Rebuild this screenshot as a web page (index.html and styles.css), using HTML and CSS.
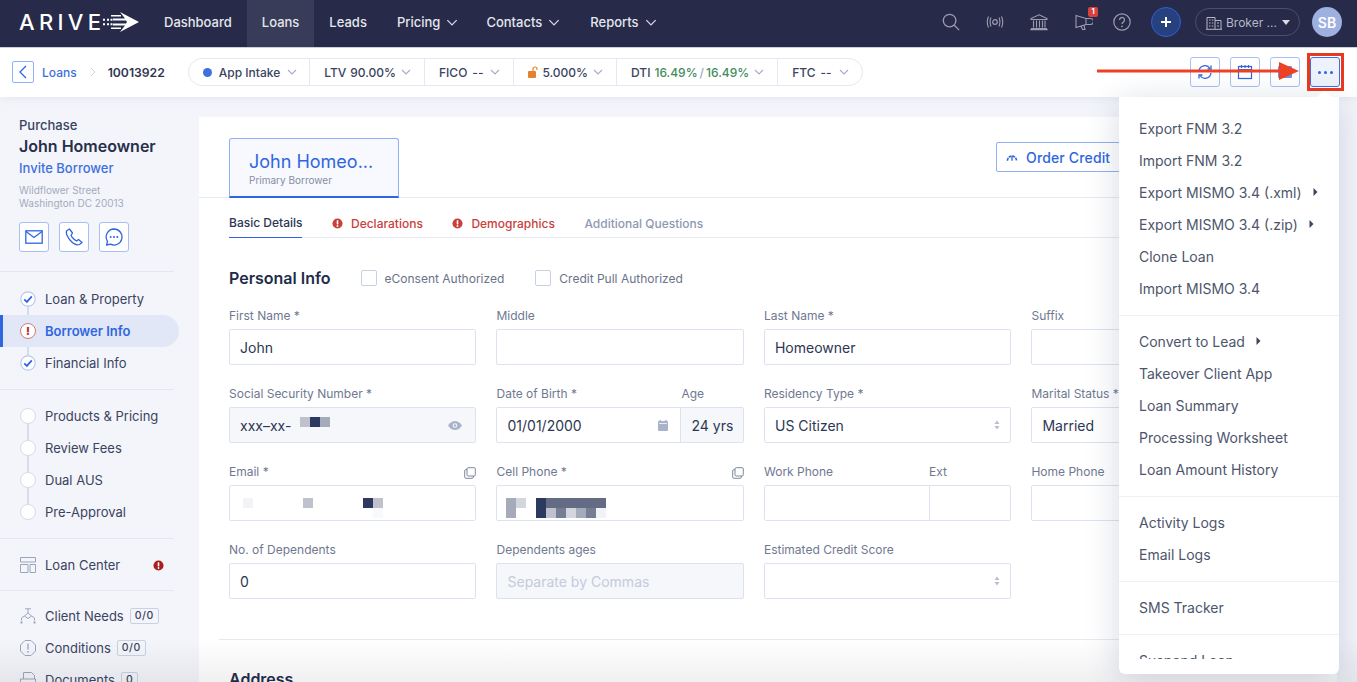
FILE: index.html
```html
<!DOCTYPE html>
<html lang="en">
<head>
<meta charset="utf-8">
<title>Arive Loan</title>
<link rel="stylesheet" href="styles.css">
</head>
<body>
<svg class="sprite" aria-hidden="true">
  <symbol id="chev" viewBox="0 0 10 6"><path d="M1 1l4 4 4-4" fill="none" stroke="currentColor" stroke-width="1.1"/></symbol>
  <symbol id="check" viewBox="0 0 16 16"><circle cx="8" cy="8" r="7.2" fill="#fff" stroke="#b9c9ee" stroke-width="1.2"/><path d="M4.2 8.300l2.700 2.600 4.900-5.500" fill="none" stroke="#2f66e0" stroke-width="1.800"/></symbol>
  <symbol id="alert" viewBox="0 0 12 12"><circle cx="6" cy="6" r="5.5" fill="currentColor"/><rect x="5.1" y="2.4" width="1.8" height="4.6" rx=".7" fill="#fff"/><circle cx="6" cy="8.7" r="1" fill="#fff"/></symbol>
  <symbol id="copy" viewBox="0 0 12 12"><rect x="3" y=".7" width="8.3" height="8.3" rx="1.2" fill="none" stroke="currentColor"/><path d="M3 2.6H1.9C1.2 2.6.7 3.1.7 3.8v6.3c0 .7.5 1.2 1.2 1.2h6.3c.7 0 1.2-.5 1.2-1.2V9" fill="none" stroke="currentColor"/></symbol>
  <symbol id="updown" viewBox="0 0 6 10"><path d="M3 .5L5.5 4H.5zM3 9.5L.5 6h5z" fill="currentColor"/></symbol>
  <symbol id="right" viewBox="0 0 5 8"><path d="M.5 0l4 4-4 4z" fill="currentColor"/></symbol>
</svg>

<header class="topbar">
  <a class="logo">
    <span class="logo-word">ARIVE</span>
    <svg class="logo-mark" viewBox="0 0 36 20"><path d="M17 0l19 10-19 10 5-6.500H10v-2h13L24 10l-1-1.500H10v-2h12z" fill="#fff"/><path d="M0 6.700h2v2H0zM4 6.700h2v2H4zM7.500 6.700h2v2h-2zM0 11.300h2v2H0zM4 11.300h2v2H4zM7.500 11.300h2v2h-2zM8 3h10v1.500H8zM8 15.500h10V17H8z" fill="#fff"/></svg>
  </a>
  <nav class="mainnav">
    <a class="navitem">Dashboard</a>
    <a class="navitem is-active">Loans</a>
    <a class="navitem">Leads</a>
    <a class="navitem navitem-tight">Pricing<svg class="navchev"><use href="#chev"/></svg></a>
    <a class="navitem">Contacts<svg class="navchev"><use href="#chev"/></svg></a>
    <a class="navitem">Reports<svg class="navchev"><use href="#chev"/></svg></a>
  </nav>
  <div class="toptools">
    <span class="tool"><svg viewBox="0 0 18 18" class="ic18"><circle cx="7.600" cy="7.600" r="6.300" fill="none" stroke="currentColor" stroke-width="1.300"/><path d="M12.300 12.300l4.800 4.800" stroke="currentColor" stroke-width="1.300"/></svg></span>
    <span class="tool"><svg viewBox="0 0 18 12" class="ic18"><circle cx="9" cy="6" r="2.300" fill="none" stroke="currentColor" stroke-width="1.200"/><path d="M5 1.500Q3.200 6 5 10.500M13 1.500q1.800 4.500 0 9M2.500.5Q0 6 2.500 11.500M15.500.5Q18 6 15.500 11.500" fill="none" stroke="currentColor" stroke-width="1.100"/></svg></span>
    <span class="tool"><svg viewBox="0 0 18 16" class="ic18"><path d="M9 .8L17 4.500v1H1v-1zM1 14.500h16M.3 15.600h17.400M3.500 6.500v7M6.500 6.500v7M9.500 6.500v7M12.500 6.500v7M15 6.500v7" fill="none" stroke="currentColor" stroke-width="1.100"/></svg></span>
    <span class="tool tool-badge"><svg viewBox="0 0 18 16" class="ic18"><path d="M1 1.500l10 3h4.500a2 2 0 0 1 0 6H11l-10 3zM11 4.500v6M6 12l1.500 3.500h2.500l-1-4" fill="none" stroke="currentColor" stroke-width="1.100"/></svg><span class="badge">1</span></span>
    <span class="tool"><svg viewBox="0 0 18 18" class="ic18"><circle cx="9" cy="9" r="8.200" fill="none" stroke="currentColor" stroke-width="1.200"/><path d="M6.500 7a2.500 2.500 0 1 1 3.800 2.100c-.9.600-1.300 1-1.300 2" fill="none" stroke="currentColor" stroke-width="1.300"/><circle cx="9" cy="13.300" r=".9" fill="currentColor"/></svg></span>
    <span class="tool"><span class="plus"><svg viewBox="0 0 12 12" class="ic12"><path d="M6 1v10M1 6h10" stroke="#fff" stroke-width="2"/></svg></span></span>
  </div>
  <div class="broker">
    <svg viewBox="0 0 16 16" class="ic16"><path d="M1 15V3.500h8V15M9 6.500h6V15M0 15.300h16M3 6h1.500M5.800 6h1.500M3 9h1.500M5.800 9h1.500M3 12h1.500M5.800 12h1.500M11 9h2M11 12h2" fill="none" stroke="currentColor" stroke-width="1"/></svg>
    <span>Broker ...</span>
    <i class="caret"></i>
  </div>
  <span class="avatar">SB</span>
</header>

<div class="subbar">
  <button class="backbtn"><svg viewBox="0 0 8 14" class="ic-back"><path d="M7 1L1 7l6 6" fill="none" stroke="#2f66e0" stroke-width="1.300"/></svg></button>
  <a class="crumb">Loans</a>
  <svg viewBox="0 0 6 10" class="crumbsep"><path d="M1 1l4 4-4 4" fill="none" stroke="#c9d0e2" stroke-width="1"/></svg>
  <strong class="loanno">10013922</strong>
  <div class="pills">
    <span class="pill pill-first"><i class="dot"></i>App Intake<svg class="chev"><use href="#chev"/></svg></span>
    <span class="pill pill-tight"><span class="pill-label">LTV</span>90.00%<svg class="chev"><use href="#chev"/></svg></span>
    <span class="pill"><span class="pill-label">FICO</span>--<svg class="chev"><use href="#chev"/></svg></span>
    <span class="pill pill-tight"><svg viewBox="0 0 10 12" class="lock"><rect y="5" width="8" height="7" rx="1" fill="#e5822f"/><path d="M5 5.500V3a2 2 0 0 1 4 0v1" fill="none" stroke="#e5822f" stroke-width="1.200"/></svg>5.000%<svg class="chev"><use href="#chev"/></svg></span>
    <span class="pill pill-tight"><span class="pill-label">DTI</span><span class="green">16.49%</span><span class="slash">/</span><span class="green">16.49%</span><svg class="chev"><use href="#chev"/></svg></span>
    <span class="pill"><span class="pill-label">FTC</span>--<svg class="chev"><use href="#chev"/></svg></span>
  </div>
  <div class="actions">
    <button class="actbtn"><svg viewBox="0 0 16 16" class="ic16"><path d="M2 7a6 6 0 0 1 11-2.500M14 9a6 6 0 0 1-11 2.500" fill="none" stroke="#2f66e0" stroke-width="1.300"/><path d="M14 1.500v3.500h-3.500M2 14.500V11h3.500" fill="none" stroke="#2f66e0" stroke-width="1.300"/></svg></button>
    <button class="actbtn"><svg viewBox="0 0 16 16" class="ic16"><rect x="1.500" y="2.500" width="13" height="12" fill="none" stroke="#2f66e0" stroke-width="1.200"/><path d="M1.500 5.500h13M4.500 1v3M8 1v3M11.500 1v3" fill="none" stroke="#2f66e0" stroke-width="1.200"/></svg></button>
    <button class="actbtn"><svg viewBox="0 0 16 16" class="ic16"><rect x="1" y="2" width="14" height="12" rx="1" fill="#6f93e6"/></svg></button>
    <button class="actbtn is-on"><i></i><i></i><i></i></button>
  </div>
</div>

<main class="main">
  <aside class="sidebar">
    <div class="person">
      <div class="purpose">Purchase</div>
      <div class="pname">John Homeowner</div>
      <a class="invite">Invite Borrower</a>
      <div class="addr">Wildflower Street<br>Washington DC 20013</div>
      <div class="contact">
        <button class="actbtn"><svg viewBox="0 0 18 14" class="ic18"><rect x=".8" y=".8" width="16.400" height="12.400" fill="none" stroke="#2f66e0" stroke-width="1.300"/><path d="M1 1.500l8 6 8-6" fill="none" stroke="#2f66e0" stroke-width="1.300"/></svg></button>
        <button class="actbtn"><svg viewBox="0 0 18 18" class="ic18"><path d="M4.500 1L2 2.500C.8 4 1.500 7.500 5 12c3 3.500 7 5.500 9.500 4.500L17 14.500l-3.500-3-2 1.500C10 12.500 7 9.500 6 7.500l1.500-2.500z" fill="none" stroke="#2f66e0" stroke-width="1.300" stroke-linejoin="round"/></svg></button>
        <button class="actbtn"><svg viewBox="0 0 18 18" class="ic18"><path d="M9 1a8 8 0 1 1-3.500 15.200L1.500 17l1-3.600A8 8 0 0 1 9 1z" fill="none" stroke="#2f66e0" stroke-width="1.300" stroke-linejoin="round"/><circle cx="5.700" cy="9" r="1" fill="#2f66e0"/><circle cx="9" cy="9" r="1" fill="#2f66e0"/><circle cx="12.300" cy="9" r="1" fill="#2f66e0"/></svg></button>
      </div>
    </div>
    <div class="sidegroup steps">
      <a class="step"><svg class="stepic"><use href="#check"/></svg>Loan &amp; Property</a>
      <a class="step is-current"><span class="stepwarn">!</span>Borrower Info</a>
      <a class="step"><svg class="stepic"><use href="#check"/></svg>Financial Info</a>
    </div>
    <div class="sidegroup steps steps-b">
      <a class="step"><span class="stepo"></span>Products &amp; Pricing</a>
      <a class="step"><span class="stepo"></span>Review Fees</a>
      <a class="step"><span class="stepo"></span>Dual AUS</a>
      <a class="step"><span class="stepo"></span>Pre-Approval</a>
    </div>
    <div class="sidegroup single">
      <a class="step"><svg viewBox="0 0 16 16" class="stepic sideic"><path d="M.5.500h15v4.500H.5zM.5 7.500h7.500v8H.5zM10 7.500h5.500v8H10z" fill="none" stroke="currentColor"/></svg>Loan Center<svg class="sidealert"><use href="#alert"/></svg></a>
    </div>
    <div class="sidegroup plain">
      <a class="step"><svg viewBox="0 0 16 16" class="stepic sideic"><path d="M5 .800h6M8 1v4M8 5l3.500 3L8 10.500 4.500 8zM4.500 8L1.500 10v2.500M11.500 8l3 2v2.500" fill="none" stroke="currentColor"/><rect x=".5" y="13.500" width="2" height="2" fill="currentColor"/><rect x="13.500" y="13.500" width="2" height="2" fill="currentColor"/></svg>Client Needs<span class="count">0/0</span></a>
      <a class="step"><svg viewBox="0 0 16 16" class="stepic sideic"><path d="M5 .500h6L15.500 5v6L11 15.500H5L.5 11V5z" fill="none" stroke="currentColor"/><path d="M8 3.500v6" stroke="currentColor" stroke-width="1.300"/><circle cx="8" cy="11.800" r=".9" fill="currentColor"/></svg>Conditions<span class="count">0/0</span></a>
      <a class="step"><svg viewBox="0 0 16 16" class="stepic sideic"><path d="M3.500 7V.500h8l3 3V7M.5 7h15v6H.5zM3.500 13v2.500h11V13" fill="none" stroke="currentColor"/></svg>Documents<span class="count">0</span></a>
    </div>
  </aside>

  <section class="card">
    <div class="cardhead">
      <div class="btab">
        <div class="btab-name">John Homeo...</div>
        <div class="btab-role">Primary Borrower</div>
      </div>
      <button class="ordercredit"><svg viewBox="0 0 14 12" class="ic-gauge"><path d="M1.500 10.500a5.500 5.500 0 1 1 11 0" fill="none" stroke="#2f66e0" stroke-width="2" stroke-dasharray="3.500 .8"/><path d="M7 5v5.500" stroke="#2f66e0" stroke-width="1.600"/></svg>Order Credit</button>
    </div>
    <div class="tabs">
      <a class="tab is-active">Basic Details</a>
      <a class="tab is-error"><svg class="ic-alert"><use href="#alert"/></svg>Declarations</a>
      <a class="tab is-error"><svg class="ic-alert"><use href="#alert"/></svg>Demographics</a>
      <a class="tab">Additional Questions</a>
    </div>

    <div class="sectionhead">
      <h2 class="sectiontitle">Personal Info</h2>
      <label class="chk"><i class="box"></i>eConsent Authorized</label>
      <label class="chk"><i class="box"></i>Credit Pull Authorized</label>
    </div>

    <div class="formgrid">
      <div class="field"><div class="flabel">First Name *</div><div class="control">John</div></div>
      <div class="field"><div class="flabel">Middle</div><div class="control"></div></div>
      <div class="field"><div class="flabel">Last Name *</div><div class="control">Homeowner</div></div>
      <div class="field"><div class="flabel">Suffix</div><div class="control"></div></div>

      <div class="field"><div class="flabel">Social Security Number *</div>
        <div class="control is-muted">xxx–xx-<span class="mosaic m-ssn"><i class="s2"></i><i class="s9"></i><i class="s3"></i></span>
          <svg viewBox="0 0 14 9" class="eye"><path d="M0 4.500Q3 0 7 0t7 4.500Q11 9 7 9T0 4.500z" fill="#a8b3cb"/><circle cx="7" cy="4.500" r="2.300" fill="#f5f7fa"/><circle cx="7" cy="4.500" r="1.200" fill="#a8b3cb"/></svg>
        </div></div>
      <div class="field"><div class="flabel"><span class="w-dob">Date of Birth *</span><span>Age</span></div>
        <div class="control split">
          <div class="cell cell-dob">01/01/2000<svg viewBox="0 0 10 11" class="cal"><rect y="1" width="10" height="10" rx="1" fill="#a8b3cb"/><rect x="1.500" width="1.500" height="2" fill="#a8b3cb"/><rect x="7" width="1.500" height="2" fill="#a8b3cb"/><rect x="1" y="3" width="8" height=".8" fill="#f7f8fb"/></svg></div>
          <div class="cell cell-age"><span class="clipage">24 yrs</span></div>
        </div></div>
      <div class="field"><div class="flabel">Residency Type *</div><div class="control">US Citizen<svg class="updown"><use href="#updown"/></svg></div></div>
      <div class="field"><div class="flabel">Marital Status *</div><div class="control">Married</div></div>

      <div class="field"><div class="flabel flabel-copy">Email *<svg class="copy"><use href="#copy"/></svg></div>
        <div class="control"><span class="mosaic m-email"><i class="s1"></i><i></i><i></i><i></i><i></i><i></i><i class="s2"></i><i></i><i></i><i></i><i></i><i></i><i class="s9"></i><i class="s2"></i><i></i><i></i><i></i><i></i><i></i><i></i><i></i><i></i><i></i><i></i><i></i><i></i><i></i><i class="s0"></i></span></div></div>
      <div class="field"><div class="flabel flabel-copy">Cell Phone *<svg class="copy"><use href="#copy"/></svg></div>
        <div class="control"><span class="mosaic m-phone"><i class="s3"></i><i class="s2b"></i><i></i><i class="s9"></i><i class="s5"></i><i class="s5"></i><i class="s5"></i><i class="s5"></i><i class="s5"></i><i class="s5"></i><i class="s3"></i><i></i><i></i><i class="s9"></i><i class="s2"></i><i class="s4"></i><i class="s2b"></i><i class="s3"></i><i class="s4"></i><i class="s1"></i></span></div></div>
      <div class="field"><div class="flabel"><span class="w-work">Work Phone</span><span>Ext</span></div>
        <div class="control split"><div class="cell cell-work"></div><div class="cell cell-ext"></div></div></div>
      <div class="field"><div class="flabel">Home Phone</div><div class="control"></div></div>

      <div class="field"><div class="flabel">No. of Dependents</div><div class="control">0</div></div>
      <div class="field"><div class="flabel">Dependents ages</div><div class="control is-muted is-placeholder">Separate by Commas</div></div>
      <div class="field"><div class="flabel">Estimated Credit Score</div><div class="control"><svg class="updown"><use href="#updown"/></svg></div></div>
    </div>

    <hr class="carddiv">
    <h2 class="sectiontitle address">Address</h2>
  </section>
</main>

<div class="bottomfade"></div>

<div class="menu">
  <i class="menucaret"></i>
  <div class="menuscroll">
    <a class="mi">Export FNM 3.2</a>
    <a class="mi">Import FNM 3.2</a>
    <a class="mi">Export MISMO 3.4 (.xml)<svg class="miarrow"><use href="#right"/></svg></a>
    <a class="mi">Export MISMO 3.4 (.zip)<svg class="miarrow"><use href="#right"/></svg></a>
    <a class="mi">Clone Loan</a>
    <a class="mi">Import MISMO 3.4</a>
    <hr class="midiv">
    <a class="mi">Convert to Lead<svg class="miarrow"><use href="#right"/></svg></a>
    <a class="mi">Takeover Client App</a>
    <a class="mi">Loan Summary</a>
    <a class="mi">Processing Worksheet</a>
    <a class="mi">Loan Amount History</a>
    <hr class="midiv">
    <a class="mi">Activity Logs</a>
    <a class="mi">Email Logs</a>
    <hr class="midiv">
    <a class="mi">SMS Tracker</a>
    <hr class="midiv">
    <a class="mi">Suspend Loan</a>
  </div>
</div>

<div class="redbox"></div>
<svg class="redarrow" viewBox="0 0 202 18"><path d="M0 7.500h182v3H0z" fill="#ee4023"/><path d="M182 0l20 9-20 9z" fill="#ee4023"/></svg>
</body>
</html>
```

FILE: styles.css
```css
* { box-sizing: border-box; }
html, body { margin: 0; height: 682px; overflow: hidden; }
body { font-family: Inter, "Liberation Sans", sans-serif; font-size: 14px; color: #2d3654; background: #f3f5fa; position: relative; }
a { color: inherit; text-decoration: none; }
button { font: inherit; padding: 0; cursor: pointer; background: none; }
svg { display: block; flex: none; }
.sprite { width: 0; height: 0; position: absolute; }
.ic18 { width: 18px; height: 18px; }
.ic16 { width: 16px; height: 16px; }
.ic12 { width: 12px; height: 12px; }

/* top bar */
.topbar { height: 48px; background: #272b49; color: #e4e6ee; display: flex; align-items: center; padding: 0 15px 3px 0; border-bottom: 1px solid #cfd4e2; }
.logo { display: flex; align-items: center; width: 149px; padding-left: 19px; color: #fff; }
.logo-word { font-size: 22px; font-weight: 500; letter-spacing: 4.300px; line-height: 1; width: 84px; }
.logo-mark { width: 36px; height: 20px; }
.mainnav { display: flex; height: 47px; align-self: flex-start; }
.navitem { display: flex; align-items: center; padding: 0 15px 3px; font-size: 13px; font-weight: 500; }
.navitem-tight { padding-right: 13px; }
.navitem.is-active { background: #393c58; }
.navchev { width: 12px; height: 7px; margin-left: 6px; color: #d7dae4; }
.toptools { margin-left: auto; display: flex; align-items: center; color: #9a9dae; }
.tool { width: 44px; display: flex; justify-content: center; position: relative; }
.tool-badge { margin: 0 -6px 0 1px; }
.badge { position: absolute; left: 26px; top: -6px; min-width: 10px; height: 10px; border-radius: 2px; background: #d9413e; color: #fff; font-size: 7.500px; font-weight: 700; line-height: 10px; text-align: center; }
.plus { width: 30px; height: 30px; border-radius: 50%; background: #27407e; border: 1px solid #2f61d6; display: flex; align-items: center; justify-content: center; }
.broker { margin-left: 7px; width: 105px; height: 28px; border: 1px solid #4b4f6c; border-radius: 14px; display: flex; align-items: center; padding-left: 10px; color: #b5b8c6; font-size: 12px; }
.broker span { margin-left: 4px; white-space: nowrap; }
.caret { width: 0; height: 0; margin-left: 5px; border: 4.500px solid transparent; border-top: 5px solid #d9dbe3; border-bottom: 0; }
.avatar { margin-left: 12px; width: 30px; height: 30px; border-radius: 50%; background: #9db0e0; color: #fff; font-size: 14px; font-weight: 600; display: flex; align-items: center; justify-content: center; }

/* sub bar */
.subbar { height: 49px; background: #fff; display: flex; align-items: center; padding: 0 0 1px 12px; box-shadow: 0 2px 8px rgba(60, 75, 120, .08); position: relative; z-index: 2; }
.backbtn { width: 22px; height: 22px; border: 1px solid #8fb0f5; border-radius: 2px; display: flex; align-items: center; justify-content: center; }
.ic-back { width: 8px; height: 14px; }
.crumb { margin-left: 8px; color: #3f70e0; font-size: 12px; font-weight: 500; }
.crumbsep { width: 6px; height: 10px; margin: 0 12px 0 13px; }
.loanno { font-size: 12.200px; font-weight: 600; color: #2d3654; }
.pills { margin-left: 23px; height: 28px; border: 1px solid #e4e8f3; border-radius: 14px; display: flex; font-size: 12px; font-weight: 500; color: #3a4361; }
.pill { display: flex; align-items: center; padding: 0 13px 0 14px; white-space: nowrap; border-left: 1px solid #e4e8f3; }
.pill-first { border-left: 0; padding: 0 12px 0 14px; }
.dot { width: 9px; height: 9px; border-radius: 50%; background: #3f70e0; margin-right: 7px; }
.pill-label { margin-right: 5px; }
.lock { width: 10px; height: 12px; margin-right: 4px; }
.green { color: #3f8d5d; }
.slash { color: #a0a8bd; margin: 0 2px; }
.chev { width: 10px; height: 6px; margin-left: 7px; color: #a5adc2; }
.pill-tight .chev { margin-left: 5px; }
.pill-tight .pill-label { margin-right: 4px; }
.actions { margin-left: auto; margin-right: 17px; display: flex; gap: 10px; }
.actbtn { width: 30px; height: 30px; border: 1px solid #a6c0f5; border-radius: 3px; background: #fff; display: flex; align-items: center; justify-content: center; }
.actbtn.is-on { background: #eef2fc; border-color: #3f70e0; gap: 3px; }
.actbtn.is-on i { width: 3px; height: 3px; border-radius: 50%; background: #2f66e0; }

/* layout */
.main { display: flex; height: 585px; overflow: hidden; }
.sidebar { width: 199px; flex: none; background: #f3f5fa; padding-top: 18px; color: #3a4361; }
.person { padding-left: 19px; height: 157px; border-bottom: 1px solid #e3e7f0; margin-right: 25px; }
.purpose { font-size: 13px; font-weight: 500; line-height: 20px; color: #3a4361; }
.pname { font-size: 16px; font-weight: 600; line-height: 22px; color: #272f4c; }
.invite { display: block; font-size: 13px; font-weight: 500; line-height: 22px; color: #3f70e0; }
.addr { margin-top: 5px; font-size: 10px; line-height: 13px; color: #a3abbe; }
.contact { display: flex; gap: 10px; margin-top: 12px; }
.sidegroup { border-bottom: 1px solid #e3e7f0; margin-right: 25px; }
.steps { padding: 11px 0 10px; position: relative; }
.steps::before { content: ""; position: absolute; left: 27px; top: 27px; bottom: 27px; width: 1.500px; background: #d5dcec; }
.steps-b { padding-top: 10px; padding-bottom: 10px; }
.single { padding: 10px 0 9px; }
.plain { border: 0; padding-top: 9px; }
.step { height: 32px; display: flex; align-items: center; padding-left: 20px; font-size: 13px; position: relative; white-space: nowrap; }
.stepic { width: 16px; height: 16px; margin-right: 9px; position: relative; }
.sideic { color: #9aa5bd; }
.stepo { width: 16px; height: 16px; margin-right: 9px; border-radius: 50%; background: #fff; border: 1.500px solid #d5dcec; position: relative; }
.stepwarn { width: 16px; height: 16px; margin-right: 9px; border-radius: 50%; background: #fff; border: 1.200px solid #cf7c78; color: #b42a2a; font-size: 11px; font-weight: 800; line-height: 14px; text-align: center; position: relative; }
.is-current { background: #e1e7f6; color: #2f66e0; font-weight: 600; border-left: 3px solid #2f66e0; padding-left: 17px; border-radius: 0 16px 16px 0; margin-right: -5px; }
.sidealert { width: 11px; height: 11px; color: #a81f1f; margin-left: 33px; }
.count { margin-left: 6px; height: 16px; min-width: 15px; padding: 0 4px; border: 1px solid #c9d2e3; border-radius: 2px; font-size: 10.500px; line-height: 14px; font-weight: 500; text-align: center; letter-spacing: .5px; }

/* card */
.card { width: 1138px; flex: none; margin-top: 20px; background: #fff; padding-top: 21px; overflow: hidden; }
.cardhead { display: flex; justify-content: space-between; align-items: flex-start; height: 60px; padding: 0 215px 0 30px; border-bottom: 1px solid #e6e9f2; }
.btab { width: 170px; height: 60px; background: #f8f9ff; border: 1px solid #8fb0f5; border-bottom: 2px solid #2f66e0; border-radius: 3px 3px 0 0; padding: 12px 19px 0; }
.btab-name { font-size: 18px; line-height: 22px; color: #2f66e0; white-space: nowrap; }
.btab-role { font-size: 10px; line-height: 14px; color: #848ca4; }
.ordercredit { margin-top: 4px; width: 126px; height: 30px; border: 1px solid #8fb0f5; border-radius: 2px; background: #fff; color: #2f66e0; font-size: 14px; font-weight: 500; letter-spacing: .15px; display: flex; align-items: center; padding-left: 9px; }
.ic-gauge { width: 12px; height: 10px; margin-right: 8px; }
.tabs { margin: 0 0 0 30px; height: 40px; display: flex; gap: 29.500px; border-bottom: 1px solid #e6e9f2; font-size: 12px; font-weight: 500; color: #8f98b2; }
.tab { height: 40px; display: flex; align-items: center; padding-top: 10px; }
.tab.is-active { color: #2d3654; border-bottom: 1px solid #2f66e0; }
.tab.is-error { color: #c9403a; }
.ic-alert { width: 11px; height: 11px; margin-right: 8px; }
.sectionhead { margin: 30px 0 19px 30px; height: 20px; display: flex; align-items: center; }
.sectiontitle { margin: 0; font-size: 16px; line-height: 20px; font-weight: 600; color: #232b4a; }
.chk { display: flex; align-items: center; margin-left: 30px; font-size: 12px; color: #6a7389; }
.chk + .chk { margin-left: 31px; }
.box { width: 16px; height: 16px; border: 1px solid #c8d0e3; border-radius: 2px; margin-right: 8px; }
.formgrid { display: grid; grid-template-columns: repeat(4, 247.300px); gap: 20px 20.200px; padding-left: 30px; }
.field { min-width: 0; }
.flabel { height: 16px; margin-bottom: 6px; display: flex; align-items: center; font-size: 12px; color: #6f7891; white-space: nowrap; position: relative; }
.flabel-copy { justify-content: space-between; }
.copy { width: 12px; height: 12px; color: #7f879c; margin-top: 4px; }
.w-dob { width: 185px; }
.w-work { width: 165px; }
.control { height: 36px; border: 1px solid #dce2ef; border-radius: 2px; background: #fff; display: flex; align-items: center; padding: 0 10px; font-size: 14px; color: #2d3654; position: relative; }
.is-muted { background: #f5f7fa; }
.is-placeholder { color: #c3cbdc; }
.eye { width: 14px; height: 9px; margin-left: auto; margin-right: 3px; }
.split { padding: 0; }
.cell { height: 100%; display: flex; align-items: center; padding: 0 10px; }
.cell-dob { width: 184px; border-right: 1px solid #dce2ef; }
.cell-age { flex: 1; background: #f5f7fa; min-width: 0; }
.clipage { display: block; overflow: hidden; white-space: nowrap; }
.cal { width: 10px; height: 11px; margin-left: auto; margin-right: 2px; }
.cell-work { width: 165px; border-right: 1px solid #dce2ef; }
.cell-ext { flex: 1; }
.updown { width: 6px; height: 10px; color: #b6bed0; position: absolute; right: 10px; top: 12px; }
.mosaic { display: grid; grid-auto-rows: 10px; grid-template-columns: repeat(14, 10px); align-self: flex-start; }
.mosaic i { display: block; width: 10px; height: 10px; }
.m-ssn { grid-template-columns: repeat(3, 10px); margin: 9px 0 0 9px; }
.m-email { margin: 12px 0 0 3px; }
.m-phone { grid-template-columns: repeat(10, 10px); margin: 12px 0 0 -1px; }
.s0 { background: #f8f9fb; }
.s1 { background: #f2f3f6; }
.s2 { background: #bfc2cc; }
.s2b { background: #d4d6de; }
.s3 { background: #a6abb9; }
.s4 { background: #767e93; }
.s5 { background: #636c84; }
.s9 { background: #2d3a5f; }
.carddiv { margin: 40px 0 0 20px; border: 0; border-top: 1px solid #e6e9f2; }
.address { margin: 29px 0 0 30px; }

/* overlays */
.bottomfade { position: absolute; left: 0; right: 0; bottom: 0; height: 42px; z-index: 3; background: linear-gradient(rgba(40, 40, 60, 0), rgba(40, 40, 60, .07)); pointer-events: none; }
.menu { position: absolute; left: 1119px; top: 97px; width: 220px; height: 577px; z-index: 4; background: #fff; border-radius: 0 0 6px 6px; padding-top: 16px; box-shadow: 0 6px 34px rgba(50, 65, 110, .2); }
.menucaret { position: absolute; left: 200px; top: -5px; width: 11px; height: 11px; background: #fff; transform: rotate(45deg); }
.menuscroll { height: 546px; overflow: hidden; position: relative; }
.mi { display: flex; align-items: center; height: 32px; padding: 0 0 2px 20px; font-size: 14px; color: #4d556c; white-space: nowrap; }
.miarrow { width: 5px; height: 8px; margin-left: 11px; color: #3f465c; }
.midiv { margin: 10px 0; border: 0; border-top: 1px solid #eef0f5; }
.redbox { position: absolute; left: 1307px; top: 53px; width: 37px; height: 38px; border: 3px solid #e8381f; z-index: 5; }
.redarrow { position: absolute; left: 1097px; top: 62px; width: 202px; height: 18px; z-index: 5; }
```
